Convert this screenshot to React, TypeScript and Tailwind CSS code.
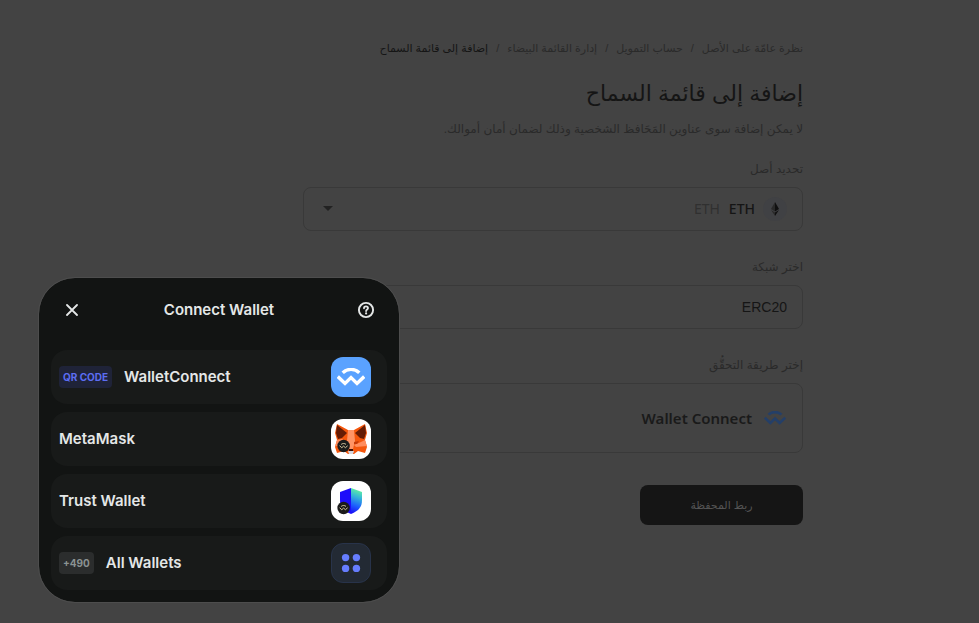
import { useState } from "react";
import type { ReactNode } from "react";

interface Crumb {
  label: string;
  current?: boolean;
}

interface Wallet {
  name: string;
  tag?: string;
  tagClass?: string;
  icon: ReactNode;
}

const crumbs: Crumb[] = [
  { label: "نظرة عامّة على الأصل" },
  { label: "حساب التمويل" },
  { label: "إدارة القائمة البيضاء" },
  { label: "إضافة إلى قائمة السماح", current: true },
];

const WavePath: React.FC<{ className?: string }> = ({ className }) => (
  <svg viewBox="0 0 28 18" fill="none" className={className}>
    <path
      d="M5.7 4.7C10.3 0.3 17.7 0.3 22.3 4.7"
      stroke="currentColor"
      strokeWidth="3.4"
    />
    <path
      d="M0.8 8.6L8 15.4L14 9.6L20 15.4L27.2 8.6"
      stroke="currentColor"
      strokeWidth="3.4"
      strokeLinejoin="miter"
    />
  </svg>
);

const WalletBadge: React.FC = () => (
  <g>
    <circle cx="12.6" cy="27" r="6.2" fill="#1b1b1b" />
    <path
      d="M10.2 25.4C11.6 24.2 13.6 24.2 15 25.4M8.6 26.8L10.8 28.7L12.6 27.1L14.4 28.7L16.6 26.8"
      stroke="#d9c9a0"
      strokeWidth="1"
      fill="none"
    />
  </g>
);

const WalletConnectIcon: React.FC = () => (
  <span className="flex size-10 items-center justify-center rounded-xl bg-[#5aa2ff] text-white">
    <WavePath className="h-[18px] w-7" />
  </span>
);

const MetaMaskIcon: React.FC = () => (
  <svg viewBox="0 0 40 40" className="size-10 rounded-xl bg-white">
    <path
      d="M6 5L17 11H23L34 5L36 14L34 21L36 28L34 34L27 32L23 35H17L13 32L6 34L4 28L6 21L4 14Z"
      fill="#f4560c"
    />
    <path d="M17 11H23L24 22L22 30H18L16 22Z" fill="#ff9465" />
    <path d="M6 6L16 14L11 19L7 20L5 14Z" fill="#651c05" />
    <path d="M34 6L24 14L29 19L33 20L35 14Z" fill="#651c05" />
    <path d="M6 21L11 20L16 24L12 27L4 27Z" fill="#ff8d5d" />
    <path d="M34 21L30 23L23 26L25 28L36 27Z" fill="#ff8d5d" />
    <path d="M23 23L28 22L26 25L23 25Z" fill="#c23a0a" />
    <path d="M18 30H22L22 32H18Z" fill="#3a0d02" />
    <path d="M17 32H23L22 35H18Z" fill="#d5d8e0" />
    <WalletBadge />
  </svg>
);

const TrustIcon: React.FC = () => (
  <svg viewBox="0 0 40 40" className="size-10 rounded-xl bg-white">
    <defs>
      <linearGradient id="trust" x1="30" y1="8" x2="21" y2="32" gradientUnits="userSpaceOnUse">
        <stop offset="0.05" stopColor="#62f2a0" />
        <stop offset="0.35" stopColor="#35b6d8" />
        <stop offset="0.7" stopColor="#1c5cff" />
        <stop offset="1" stopColor="#1a10f5" />
      </linearGradient>
    </defs>
    <path d="M9 11L20 7V33C12 29.5 9 26 9 19Z" fill="#1d0dfa" />
    <path d="M31 11L20 7V33C28 29.5 31 26 31 19Z" fill="url(#trust)" />
    <WalletBadge />
  </svg>
);

const AllWalletsIcon: React.FC = () => (
  <svg viewBox="0 0 40 40" className="size-10 rounded-xl border border-[#28334a] bg-[#232a34]">
    <circle cx="14.3" cy="14.3" r="3.9" fill="#667dff" />
    <circle cx="25.7" cy="14.3" r="3.9" fill="#667dff" />
    <circle cx="14.3" cy="25.7" r="3.9" fill="#667dff" />
    <circle cx="25.7" cy="25.7" r="3.9" fill="#667dff" />
  </svg>
);

const wallets: Wallet[] = [
  {
    name: "WalletConnect",
    tag: "QR CODE",
    tagClass: "bg-[#1f2338] text-[#5c6df2]",
    icon: <WalletConnectIcon />,
  },
  { name: "MetaMask", icon: <MetaMaskIcon /> },
  { name: "Trust Wallet", icon: <TrustIcon /> },
  {
    name: "All Wallets",
    tag: "+490",
    tagClass: "bg-[#2b2d2d] text-[#8a9292]",
    icon: <AllWalletsIcon />,
  },
];

const ConnectModal: React.FC<{ onClose: () => void }> = ({ onClose }) => (
  <div
    role="dialog"
    aria-label="Connect Wallet"
    dir="ltr"
    className="fixed bottom-[21px] left-[39px] w-[360px] rounded-[36px] bg-[#121413] px-3 pb-3 font-['Inter',sans-serif] text-[#e4e7e7] outline outline-[#4d4d4d]"
  >
    <div className="flex h-16 items-center justify-between px-3">
      <button type="button" aria-label="Close" onClick={onClose} className="p-[3px]">
        <svg viewBox="0 0 12 12" fill="none" className="size-3">
          <path d="M1 1L11 11M11 1L1 11" stroke="currentColor" strokeWidth="1.8" strokeLinecap="round" />
        </svg>
      </button>
      <h2 className="text-[15px] font-semibold">Connect Wallet</h2>
      <button type="button" aria-label="Help">
        <svg viewBox="0 0 18 18" fill="none" className="size-[18px]">
          <circle cx="9" cy="9" r="7.1" stroke="currentColor" strokeWidth="1.9" />
          <path
            d="M7 7.3C7 6.1 7.9 5.4 9 5.4S11 6.1 11 7.2C11 8.5 9.2 8.6 9.1 10"
            stroke="currentColor"
            strokeWidth="1.8"
            strokeLinecap="round"
          />
          <circle cx="9.1" cy="12.4" r="1.1" fill="currentColor" />
        </svg>
      </button>
    </div>
    <ul className="mt-2 flex flex-col gap-2">
      {wallets.map((wallet) => (
        <li key={wallet.name}>
          <button
            type="button"
            className="flex h-[54px] w-full items-center rounded-2xl bg-[#181a19] pl-2 pr-4"
          >
            {wallet.tag && (
              <span
                className={`mr-3 flex h-[22px] items-center rounded px-1 text-[10px] font-bold ${wallet.tagClass}`}
              >
                {wallet.tag}
              </span>
            )}
            <span className="flex-1 text-left text-[15px] font-semibold">{wallet.name}</span>
            {wallet.icon}
          </button>
        </li>
      ))}
    </ul>
  </div>
);

export default function App() {
  const [isModalOpen, setIsModalOpen] = useState<boolean>(true);

  return (
    <div
      dir="rtl"
      className="min-h-screen bg-[#434343] px-44 pt-10 font-['Liberation_Sans','DejaVu_Sans',sans-serif] text-[#2a2a2a]"
    >
      <main className="w-full max-w-[500px]">
        <nav>
          <ol className="flex h-4 items-center whitespace-nowrap text-[11px]">
            {crumbs.map((crumb, index) => (
              <li key={crumb.label} className="flex">
                {index > 0 && <span className="mx-2">/</span>}
                <a href="#" className={crumb.current ? "text-[#151515]" : ""}>
                  {crumb.label}
                </a>
              </li>
            ))}
          </ol>
        </nav>
        <h1 className="mt-[22px] text-[22px] leading-8 font-medium text-[#151515]">
          إضافة إلى قائمة السماح
        </h1>
        <p className="mt-[9px] text-xs leading-5 whitespace-nowrap">
          لا يمكن إضافة سوى عناوين المَحَافظ الشخصية وذلك لضمان أمان أموالك.
        </p>

        <form>
          <label htmlFor="asset" className="mt-5 block text-xs leading-5">
            تحديد أصل
          </label>
          <div className="mt-2 flex h-11 items-center rounded-lg border border-[#393939] px-[15px] font-['Noto_Sans',sans-serif] text-sm">
            <span className="flex size-6 items-center justify-center rounded-full bg-[#404144]">
              <svg viewBox="0 0 10 16" className="h-4 w-[10px]">
                <path d="M5 1L1 8L5 10.5Z" fill="#292929" />
                <path d="M5 1L9 8L5 10.5Z" fill="#101010" />
                <path d="M1 9L5 11.5V15Z" fill="#292929" />
                <path d="M9 9L5 11.5V15Z" fill="#101010" />
              </svg>
            </span>
            <select id="asset" className="ms-2 appearance-none font-medium text-[#151515]">
              <option>ETH</option>
            </select>
            <span className="ms-2 text-[#303030]">ETH</span>
            <svg viewBox="0 0 10 6" className="ms-auto me-1 h-[6px] w-[10px]">
              <path d="M0 0H10L5 5Z" fill="#222222" />
            </svg>
          </div>

          <label htmlFor="network" className="mt-[26px] block text-xs leading-5">
            اختر شبكة
          </label>
          <select
            id="network"
            className="mt-2 block h-11 w-full appearance-none rounded-lg border border-[#393939] px-[15px] text-sm text-[#151515]"
          >
            <option>ERC20</option>
          </select>

          <p className="mt-[26px] text-xs leading-5">إختر طريقة التحقُّق</p>
          <button
            type="button"
            className="mt-2 flex h-[70px] w-full items-center gap-3 rounded-lg border border-[#393939] px-4 font-['Noto_Sans',sans-serif] text-[15px] font-semibold text-[#1a1a1a]"
          >
            <WavePath className="h-[14px] w-[22px] text-[#243f68]" />
            Wallet Connect
          </button>

          <button
            type="button"
            onClick={() => setIsModalOpen(true)}
            className="mt-8 h-10 w-[163px] rounded-lg bg-[#151515] text-[11px] text-[#545454]"
          >
            ربط المحفظة
          </button>
        </form>
      </main>
      {isModalOpen && <ConnectModal onClose={() => setIsModalOpen(false)} />}
    </div>
  );
}
